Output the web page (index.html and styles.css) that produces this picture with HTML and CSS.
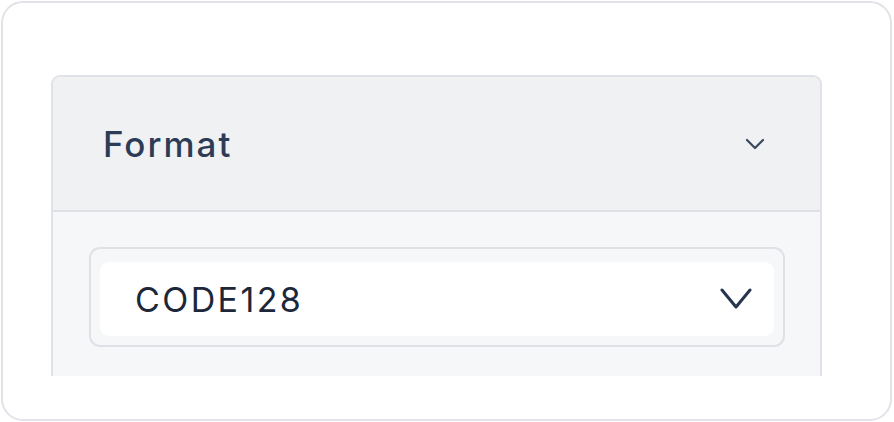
FILE: index.html
```html
<!DOCTYPE html>
<html>
<head>
<meta charset="utf-8">
<link rel="stylesheet" href="styles.css">
</head>
<body>
<div class="card">
  <div class="clip">
    <div class="panel">
      <div class="panel-head">
        <span class="title">Format</span>
        <svg class="chev-sm" width="20" height="12" viewBox="0 0 20 12"><path d="M2 2 L10 10 L18 2" fill="none" stroke="#3a475e" stroke-width="2.2" stroke-linecap="round" stroke-linejoin="round"/></svg>
      </div>
      <div class="panel-body">
        <div class="select">
          <div class="select-inner">
            <span class="value">CODE128</span>
            <svg class="chev" width="32" height="22" viewBox="0 0 32 22"><path d="M2 2 L16 19 L30 2" fill="none" stroke="#26354f" stroke-width="3" stroke-linecap="round" stroke-linejoin="round"/></svg>
          </div>
        </div>
      </div>
    </div>
  </div>
</div>
</body>
</html>
```

FILE: styles.css
```css
html, body {
  margin: 0;
  padding: 0;
  background: #ffffff;
}
body {
  font-family: Inter, "Noto Sans", sans-serif;
}
.card {
  box-sizing: border-box;
  margin: 1px 0 0 1px;
  width: 891px;
  height: 420px;
  border: 2px solid #e1e3e8;
  border-radius: 22px;
  padding: 72px 0 0 48px;
  overflow: hidden;
}
.clip {
  height: 301px;
  overflow: hidden;
}
.panel {
  box-sizing: border-box;
  width: 771px;
  border: 2px solid #e0e2e7;
  border-bottom: none;
  border-radius: 9px 9px 0 0;
  background: #f6f7f9;
}
.panel-head {
  box-sizing: border-box;
  height: 135px;
  background: #f0f1f3;
  border-bottom: 2px solid #dfe1e6;
  border-radius: 7px 7px 0 0;
  display: flex;
  align-items: center;
  justify-content: space-between;
  padding: 0 55px 0 50px;
}
.title {
  font-size: 35px;
  font-weight: 500;
  color: #2c3c56;
  letter-spacing: 2px;
}
.chev-sm {
  display: block;
}
.panel-body {
  padding: 35px 35px 40px 36px;
}
.select {
  border: 2px solid #dfe1e6;
  border-radius: 11px;
  padding: 13px 9px 9px 9px;
}
.select-inner {
  background: #ffffff;
  border-radius: 9px;
  height: 74px;
  display: flex;
  align-items: center;
  justify-content: space-between;
  padding: 0 22px 0 35px;
}
.value {
  font-size: 34px;
  font-weight: 400;
  color: #1d2739;
  letter-spacing: 2.4px;
}
.chev {
  display: block;
}
```
